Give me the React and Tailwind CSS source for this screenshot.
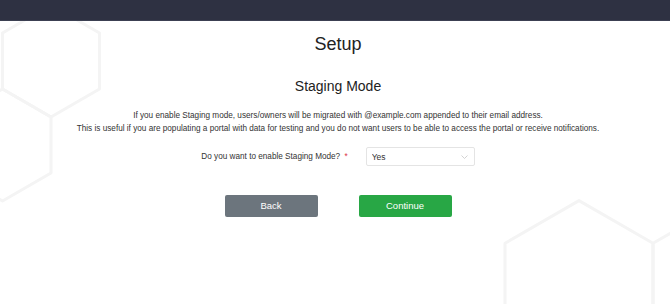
import React, { useState } from 'react';

const hexPoints = (cx, cy, r) => {
    const pts = [];
    for (let i = 0; i < 6; i++) {
        const a = (Math.PI / 180) * (60 * i - 90);
        pts.push(`${(cx + r * Math.cos(a)).toFixed(1)},${(cy + r * Math.sin(a)).toFixed(1)}`);
    }
    return pts.join(' ');
};

const Backdrop = () => (
    <svg className="absolute inset-0 pointer-events-none" width="670" height="304" viewBox="0 0 670 304" fill="none">
        <g stroke="#f4f4f4" strokeWidth="3" strokeLinejoin="round">
            <polygon points={hexPoints(51, 61, 56)} />
            <polygon points={hexPoints(2.5, 145, 56)} />
            <polygon points={hexPoints(579, 286, 85.4)} />
            <polygon points={hexPoints(727, 286, 85.4)} />
        </g>
    </svg>
);

const App = () => {
    const [staging, setStaging] = useState('Yes');

    return (
        <div className="relative h-[304px] w-full overflow-hidden bg-white font-['Liberation_Sans',Arial,sans-serif] text-[#222]">
            <Backdrop />

            {/* Top bar */}
            <header className="relative h-[21px] bg-[#2e3142] border-b border-[#3c4052]" />

            <main className="relative flex flex-col items-center pl-[6px] pt-[12px]">
                <h1 className="text-[18px] leading-[22px] text-[#222]">Setup</h1>
                <h2 className="mt-[23px] text-[14px] leading-[16px] text-[#222]">Staging Mode</h2>

                <div className="mt-[15px] text-center text-[8.2px] leading-[13px] text-[#333]">
                    <p>If you enable Staging mode, users/owners will be migrated with @example.com appended to their email address.</p>
                    <p>This is useful if you are populating a portal with data for testing and you do not want users to be able to access the portal or receive notifications.</p>
                </div>

                <div className="mt-[12px] flex h-[19px] items-center gap-[18px]">
                    <label className="text-[8.2px] leading-[10px] text-[#333]">
                        Do you want to enable Staging Mode? <span className="ml-[2px] text-[#dc3545]">*</span>
                    </label>
                    <div className="relative flex h-[19px] w-[109px] items-center rounded-[2px] border border-[#e4e4e4] bg-white">
                        <select
                            value={staging}
                            onChange={e => setStaging(e.target.value)}
                            className="h-full w-full appearance-none bg-transparent pl-[5px] text-[8.5px] leading-[10px] text-[#333] outline-none"
                        >
                            <option>Yes</option>
                            <option>No</option>
                        </select>
                        <svg className="absolute right-[6px] top-[7px] pointer-events-none" width="7" height="4" viewBox="0 0 7 4" fill="none">
                            <path d="M0.5 0.5 L3.5 3.5 L6.5 0.5" stroke="#c8c8c8" strokeWidth="0.8" />
                        </svg>
                    </div>
                </div>

                <div className="mt-[29px] flex gap-[41px]">
                    <button className="h-[22px] w-[93px] rounded-[2px] bg-[#6c757d] text-[9.5px] text-white">Back</button>
                    <button className="h-[22px] w-[93px] rounded-[2px] bg-[#28a745] text-[9.5px] text-white">Continue</button>
                </div>
            </main>
        </div>
    );
};

export default App;
